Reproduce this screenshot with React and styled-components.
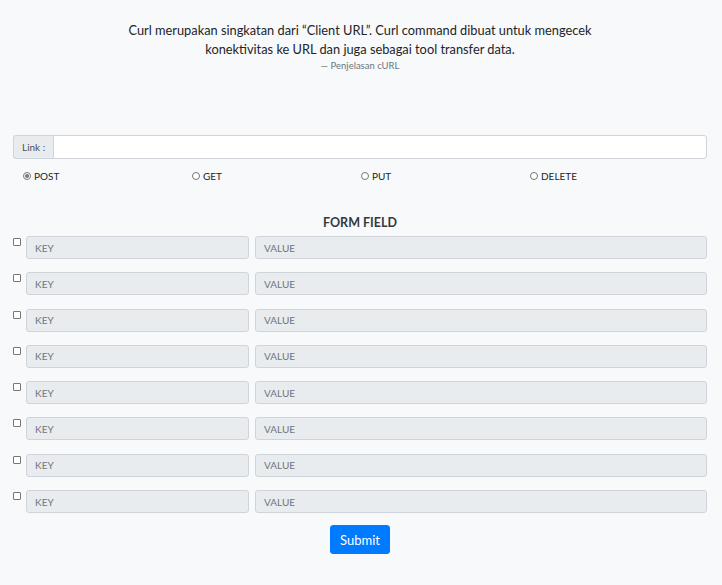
import React from "react";
import styled, { createGlobalStyle } from "styled-components";

const Global = createGlobalStyle`
  html, body { margin: 0; padding: 0; background: #f8f9fa; }
  body { font-family: Lato, "Open Sans", sans-serif; color: #212529; }
  * { box-sizing: border-box; }
`;

const Page = styled.div`
  padding: 21px 15px 30px 13px;
`;

const Quote = styled.blockquote`
  margin: 0 0 62px;
  text-align: center;
  font-size: 12.8px;
  line-height: 19px;
  color: #212529;
`;

const QuoteText = styled.p`
  margin: 0 auto;
  white-space: nowrap;
`;

const QuoteFooter = styled.footer`
  font-size: 9.5px;
  line-height: 14px;
  color: #6c757d;
`;

const InputGroup = styled.div`
  display: flex;
  height: 24px;
`;

const Prepend = styled.span`
  display: flex;
  align-items: center;
  padding: 0 8px;
  background: #e9ecef;
  border: 1px solid #ced4da;
  border-right: none;
  border-radius: 3px 0 0 3px;
  font-size: 10px;
  color: #495057;
`;

const LinkInput = styled.input`
  flex: 1;
  border: 1px solid #ced4da;
  border-radius: 0 3px 3px 0;
  background: #fff;
  outline: none;
`;

const RadioRow = styled.div`
  display: grid;
  grid-template-columns: repeat(4, 169px);
  padding: 11px 0 0 10px;
  height: 34px;
`;

const RadioLabel = styled.label`
  display: flex;
  align-items: center;
  gap: 3px;
  font-size: 10px;
  color: #212529;
  height: 12px;
`;

const Radio = styled.span`
  width: 8px;
  height: 8px;
  border-radius: 50%;
  border: 1px solid #767676;
  background: #fff;
  display: flex;
  align-items: center;
  justify-content: center;
  &::after {
    content: "";
    width: 4px;
    height: 4px;
    border-radius: 50%;
    background: ${(p) => (p.checked ? "#767676" : "transparent")};
  }
`;

const Title = styled.h5`
  margin: 22px 0 6px;
  text-align: center;
  font-size: 12.5px;
  font-weight: 700;
  color: #343a40;
  line-height: 15px;
`;

const Rows = styled.div`
  display: flex;
  flex-direction: column;
  gap: 13.3px;
`;

const Row = styled.div`
  display: flex;
  align-items: flex-start;
`;

const Check = styled.span`
  width: 8px;
  height: 8px;
  margin: 2px 5px 0 0;
  border: 1px solid #767676;
  border-radius: 1px;
  background: #fff;
  flex: none;
`;

const Field = styled.div`
  height: 23px;
  background: #e9ecef;
  border: 1px solid #ced4da;
  border-radius: 3px;
  display: flex;
  align-items: center;
  padding-left: 8px;
  font-size: 10px;
  color: #6c757d;
  width: ${(p) => p.w}px;
  flex: ${(p) => (p.grow ? 1 : "none")};
  margin-left: ${(p) => p.ml || 0}px;
`;

const SubmitWrap = styled.div`
  display: flex;
  justify-content: center;
  margin-top: 12px;
`;

const Submit = styled.button`
  background: #007bff;
  color: #fff;
  border: 1px solid #007bff;
  border-radius: 3px;
  font-family: inherit;
  font-size: 13px;
  width: 60px;
  height: 29px;
  padding: 0;
`;

const methods = ["POST", "GET", "PUT", "DELETE"];

export default function App() {
  return (
    <>
      <Global />
      <Page>
        <Quote>
          <QuoteText>
            Curl merupakan singkatan dari “Client URL”. Curl command dibuat untuk mengecek
            <br />
            konektivitas ke URL dan juga sebagai tool transfer data.
          </QuoteText>
          <QuoteFooter>— Penjelasan cURL</QuoteFooter>
        </Quote>
        <InputGroup>
          <Prepend>Link :</Prepend>
          <LinkInput />
        </InputGroup>
        <RadioRow>
          {methods.map((m, i) => (
            <RadioLabel key={m}>
              <Radio checked={i === 0} />
              {m}
            </RadioLabel>
          ))}
        </RadioRow>
        <Title>FORM FIELD</Title>
        <Rows>
          {Array.from({ length: 8 }).map((_, i) => (
            <Row key={i}>
              <Check />
              <Field w={223}>KEY</Field>
              <Field grow ml={6}>VALUE</Field>
            </Row>
          ))}
        </Rows>
        <SubmitWrap>
          <Submit>Submit</Submit>
        </SubmitWrap>
      </Page>
    </>
  );
}
